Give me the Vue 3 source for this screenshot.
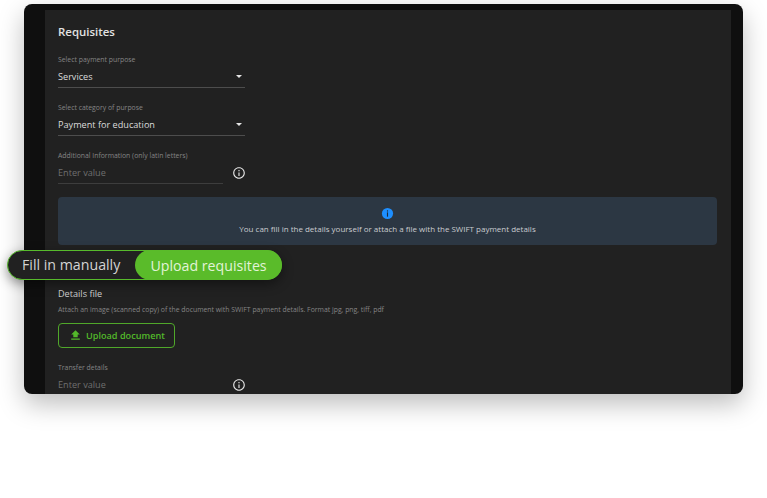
<script setup>
const infoPath = 'M11 7h2v2h-2zm0 4h2v6h-2zm1-9C6.48 2 2 6.48 2 12s4.48 10 10 10 10-4.48 10-10S17.52 2 12 2zm0 18c-4.41 0-8-3.59-8-8s3.59-8 8-8 8 3.59 8 8-3.59 8-8 8z'
</script>

<template>
  <div class="page">
    <main class="window">
      <section class="panel">
        <h1 class="title">Requisites</h1>

        <div class="field select first">
          <label class="label">Select payment purpose</label>
          <div class="control"><span class="value">Services</span><i class="caret"></i></div>
        </div>

        <div class="field select second">
          <label class="label">Select category of purpose</label>
          <div class="control"><span class="value">Payment for education</span><i class="caret"></i></div>
        </div>

        <div class="input-row third">
          <div class="field grow">
            <label class="label">Additional Information (only latin letters)</label>
            <div class="control"><span class="placeholder">Enter value</span></div>
          </div>
          <svg class="info" viewBox="0 0 24 24"><path :d="infoPath" /></svg>
        </div>

        <div class="notice">
          <svg class="notice-icon" viewBox="0 0 14 14">
            <circle cx="7" cy="7" r="6" fill="#1e8fff" />
            <rect x="6.4" y="3.6" width="1.2" height="1.3" fill="#1b2a3a" />
            <rect x="6.4" y="5.8" width="1.2" height="4.6" fill="#1b2a3a" />
          </svg>
          <p>You can fill in the details yourself or attach a file with the SWIFT payment details</p>
        </div>

        <h2 class="file-title">Details file</h2>
        <p class="hint">Attach an image (scanned copy) of the document with SWIFT payment details. Format jpg, png, tiff, pdf</p>

        <button class="upload" type="button">
          <svg viewBox="0 0 12 12"><path d="M3.6 7.9V5H1.3L6 .4 10.7 5H8.4v2.9zM1.3 9.3h9.4v1.3H1.3z" /></svg>
          <span>Upload document</span>
        </button>

        <div class="input-row fourth">
          <div class="field grow">
            <label class="label">Transfer details</label>
            <div class="control"><span class="placeholder">Enter value</span></div>
          </div>
          <svg class="info" viewBox="0 0 24 24"><path :d="infoPath" /></svg>
        </div>
      </section>
    </main>

    <div class="switch">
      <span class="opt">Fill in manually</span>
      <span class="opt active">Upload requisites</span>
    </div>
  </div>
</template>

<style>
html, body { margin: 0; background: #fff; }
</style>

<style scoped>
.page {
  position: relative;
  width: 767px;
  height: 498px;
  padding: 4px 24px 0;
  box-sizing: border-box;
  overflow: hidden;
  font-family: "Open Sans", "Noto Sans", sans-serif;
}
.window {
  width: 719px;
  height: 390px;
  background: #0f0f0f;
  border-radius: 8px;
  overflow: hidden;
  padding: 6px 12px 0 21px;
  box-sizing: border-box;
  box-shadow: 0 10px 26px rgba(0, 0, 0, 0.26);
}
.panel {
  height: 384px;
  background: #212121;
  padding: 13px 13px 0;
  box-sizing: border-box;
  overflow: hidden;
}
.title {
  margin: 0;
  font-size: 11.43px;
  line-height: 18px;
  font-weight: 600;
  color: #e2e2e2;
}
.field { display: flex; flex-direction: column; width: 187px; }
.grow { width: 165px; }
.label {
  font-size: 6.86px;
  line-height: 12px;
  color: #858585;
}
.control {
  display: flex;
  align-items: center;
  justify-content: space-between;
  height: 22px;
  padding: 0 1px 0 0;
  border-bottom: 1px solid #4d4d4d;
  box-sizing: border-box;
}
.value { font-size: 9.14px; color: #dcdcdc; }
.placeholder { font-size: 9.14px; color: #6f6f6f; }
.caret {
  width: 0;
  height: 0;
  margin-right: 2px;
  border-left: 3.5px solid transparent;
  border-right: 3.5px solid transparent;
  border-top: 3.5px solid #e6e6e6;
}
.first { margin-top: 13px; }
.second { margin-top: 14px; }
.input-row {
  display: flex;
  align-items: flex-end;
  justify-content: space-between;
  width: 188px;
}
.third { margin-top: 14px; }
.third .control { border-bottom-color: #3d3d3d; }
.info {
  width: 14px;
  height: 14px;
  fill: #e4e4e4;
  margin-bottom: 4px;
  flex: none;
}
.notice {
  margin-top: 13px;
  width: 659px;
  height: 48px;
  background: #2c3743;
  border-radius: 4px;
  display: flex;
  flex-direction: column;
  align-items: center;
  padding-top: 10px;
  box-sizing: border-box;
}
.notice-icon { width: 13px; height: 13px; flex: none; }
.notice p {
  margin: 3px 0 0;
  font-size: 8px;
  line-height: 12px;
  color: #c9ccd0;
}
.file-title {
  margin: 42px 0 0;
  font-size: 9.14px;
  line-height: 13px;
  font-weight: 400;
  color: #cfcfcf;
}
.hint {
  margin: 4px 0 0;
  font-size: 6.86px;
  line-height: 11px;
  color: #858585;
}
.upload {
  margin-top: 8px;
  width: 117px;
  height: 25px;
  padding: 0 0 0 11px;
  display: flex;
  align-items: center;
  gap: 5px;
  background: transparent;
  border: 1px solid #50a82a;
  border-radius: 4px;
  box-sizing: border-box;
  font-family: inherit;
  font-size: 9.14px;
  font-weight: 600;
  color: #53b92a;
}
.upload svg { width: 11px; height: 11px; fill: #53b92a; flex: none; }
.fourth { margin-top: 14px; }
.fourth .control { border-bottom: none; height: 21px; }
.fourth .info { margin-bottom: 3px; }
.switch {
  position: absolute;
  left: 7px;
  top: 250px;
  display: flex;
  align-items: center;
  height: 30px;
  width: 275px;
  box-sizing: border-box;
  border: 1px solid #57bb2c;
  border-radius: 15px;
  background: #212121;
  box-shadow: 0 4px 12px rgba(0, 0, 0, 0.42);
}
.opt {
  font-size: 14.2px;
  line-height: 30px;
  color: #d4d4d4;
  white-space: nowrap;
}
.opt:first-child { padding-left: 14px; width: 113px; flex: none; }
.opt.active {
  position: absolute;
  left: 127px;
  top: -1px;
  width: 147px;
  height: 30px;
  line-height: 32px;
  text-align: center;
  border-radius: 15px;
  background: #5abb2a;
  color: #e2f3d8;
}
</style>
